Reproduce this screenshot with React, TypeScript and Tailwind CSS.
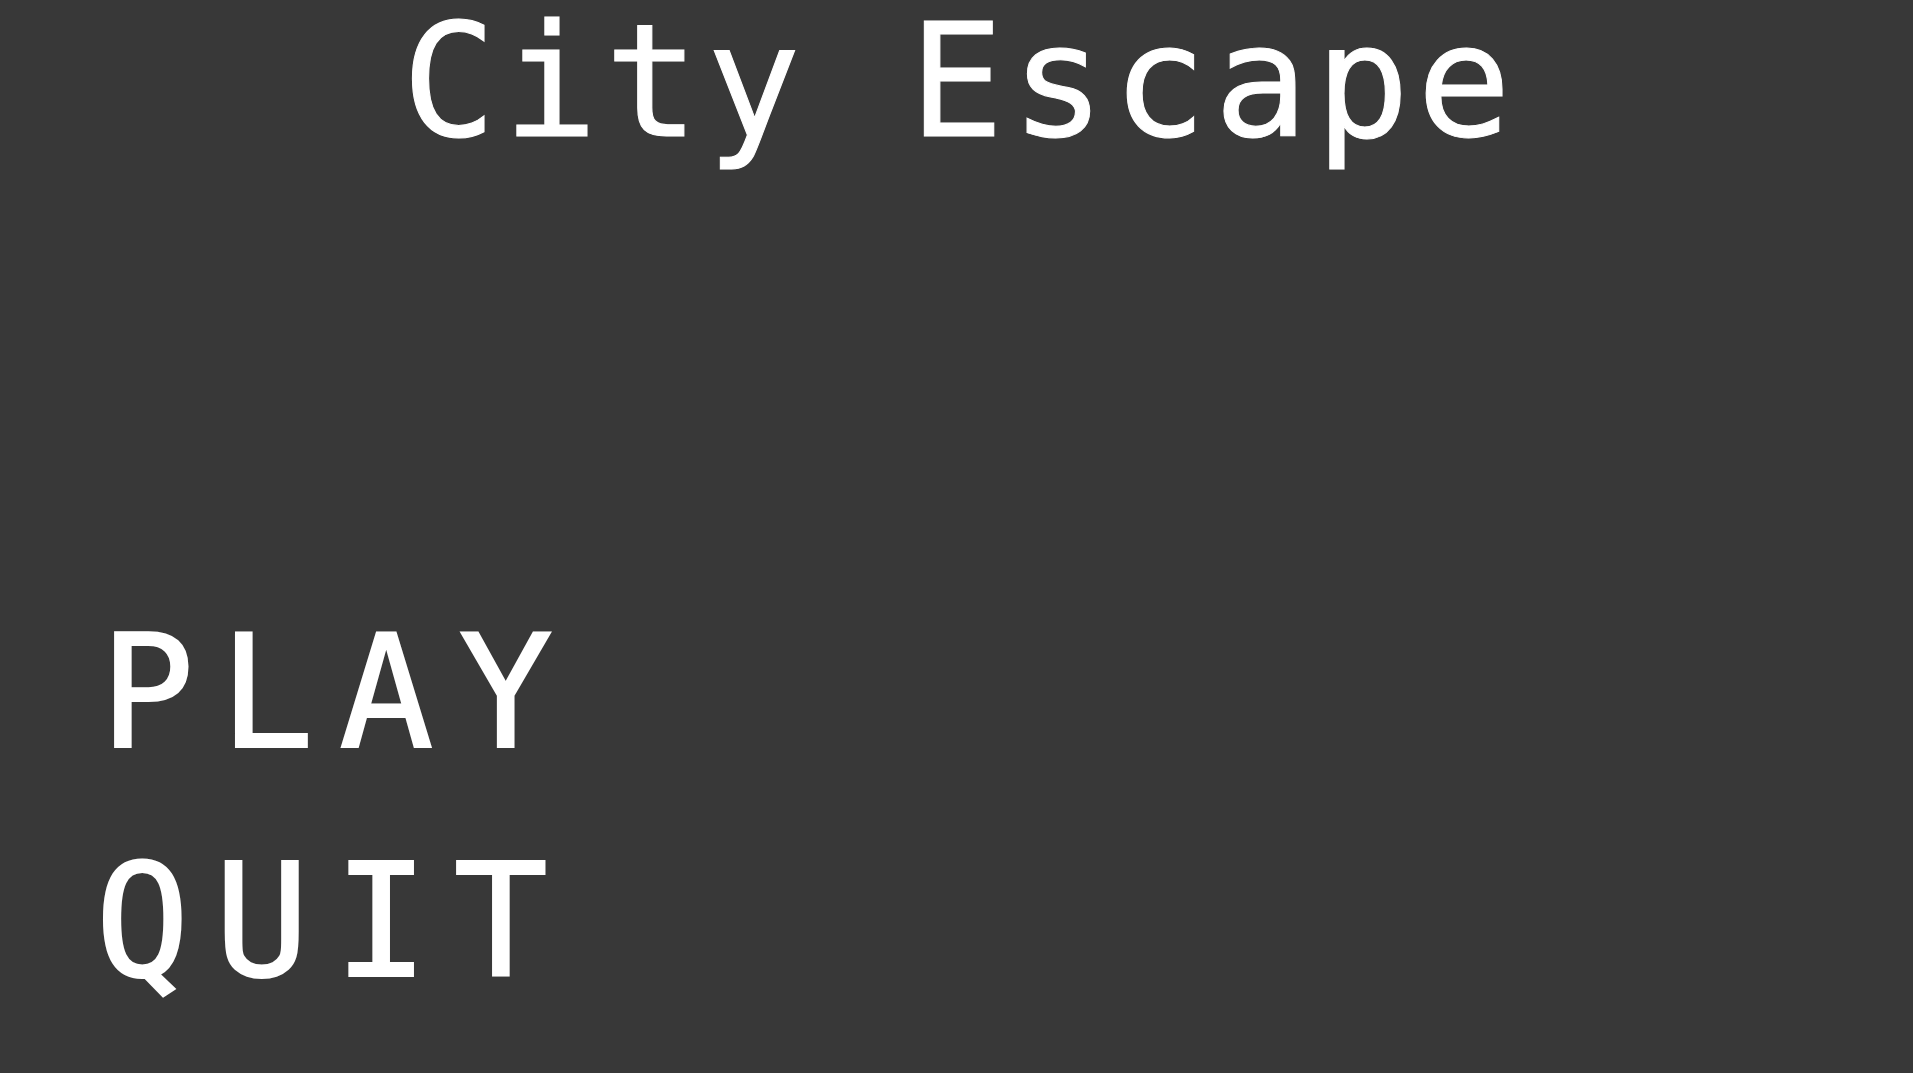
const FONT = "font-['DejaVu_Sans_Mono','Liberation_Mono',monospace]";

function MenuItem({ label, offset }: { label: string; offset: string }) {
  return (
    <button
      className={`${FONT} ${offset} block text-left text-[157px] leading-none tracking-[25px] text-white [-webkit-text-stroke:2px_#fff]`}
    >
      {label}
    </button>
  );
}

export default function App() {
  return (
    <div className="flex h-[1073px] w-full flex-col overflow-hidden bg-[#383838]">
      <h1
        className={`${FONT} pl-[7px] pt-[3px] text-center text-[157px] font-normal leading-none tracking-[7px] text-white [-webkit-text-stroke:1px_#fff]`}
      >
        City Escape
      </h1>

      <nav className="mt-[454px] flex flex-col items-start gap-[72px]">
        <MenuItem label="PLAY" offset="ml-[100px]" />
        <MenuItem label="QUIT" offset="ml-[95px]" />
      </nav>
    </div>
  );
}
